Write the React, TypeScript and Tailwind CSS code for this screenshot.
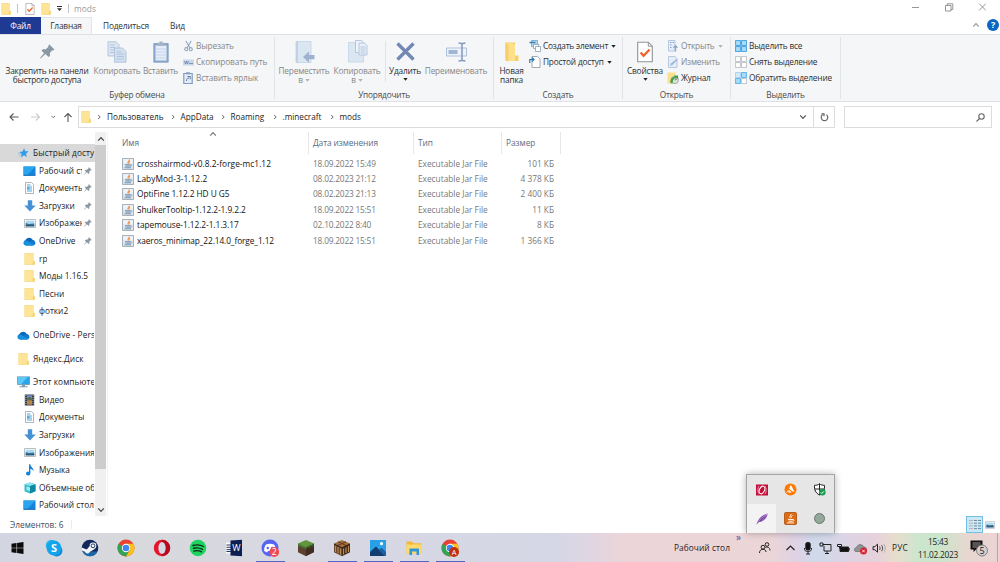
import type { ReactNode } from 'react';
import clsx from 'clsx';

type IconProps = { className?: string };

/* ---------- Small icons ---------- */

function FolderIcon({ className = 'w-[11px] h-[12px]' }: IconProps) {
  return (
    <svg className={clsx('shrink-0', className)} viewBox="0 0 11 12" preserveAspectRatio="none">
      <path d="M.5.300h9v7.500h1.200v3.900H.5z" fill="#f3cf6e" />
      <path d="M.8.600h8.400v10.800H.8z" fill="#fde497" />
      <path d="M9 8h1.500v3.400H8.300z" fill="#f6d470" />
    </svg>
  );
}

function CheckDoc({ className = 'w-[10px] h-[12px]' }: IconProps) {
  return (
    <svg className={clsx('shrink-0', className)} viewBox="0 0 16 21">
      <path d="M.7.7h10.600l4 4v15.600H.7z" fill="#fff" stroke="#8f9499" strokeWidth="1.100" />
      <path d="M11.300.7v4h4" fill="none" stroke="#8f9499" />
      <path d="M3.600 11l3 3.300 6-6.300" fill="none" stroke="#f0642c" strokeWidth="2.300" />
    </svg>
  );
}

function PinIcon({ className = 'w-[8px] h-[8px]' }: IconProps) {
  return (
    <svg className={clsx('shrink-0', className)} viewBox="0 0 16 16">
      <path d="M10 .6l5.400 5.200-1.300 1-1-.1-2.600 2.800.2 3-1.500 1.400-3.400-3.200L.6 15.400 0 15l4.300-5.200L1.600 6.900l1.500-1.400 3.100.1 2.800-2.700-.1-1.200z" fill="#8b98a3" />
    </svg>
  );
}

function StarIcon() {
  return (
    <svg className="w-[11px] h-[10px] shrink-0" viewBox="0 0 20 19">
      <path d="M11 .5l2.400 5.500 6.300.4-4.900 4.300 1.500 6.600-5.400-3.300L5 18l1.600-6.500L2 7.500l6.200-1z" fill="#2e9ce8" />
      <path d="M0 9h4M0 12h5M1 15h3" stroke="#7fc0ee" strokeWidth="1.200" />
    </svg>
  );
}

function DesktopIcon() {
  return (
    <svg className="w-[13px] h-[10px] shrink-0" viewBox="0 0 13 10">
      <path d="M.5.5h12v8.800H.5z" fill="#1585dc" />
      <path d="M.5.5h12L4 9.300H.5z" fill="#28a5ee" />
      <path d="M.5 9.300h12" stroke="#0a64b4" />
    </svg>
  );
}

function DocumentIcon() {
  return (
    <svg className="w-[11px] h-[12px] shrink-0" viewBox="0 0 11 12">
      <path d="M1.500.5h6l2 2v9h-8z" fill="#fff" stroke="#96a5b0" strokeWidth=".8" />
      <path d="M3 3h3.500M3 5h5M3 7h5M3 9h5" stroke="#3e9ad0" strokeWidth=".9" />
      <path d="M3 5h2.500v2.500H3z" fill="#56acd8" />
    </svg>
  );
}

function DownloadIcon() {
  return (
    <svg className="w-[12px] h-[12px] shrink-0" viewBox="0 0 12 12">
      <path d="M3.800.3h4.400v5.200h3.500L6 11.500.3 5.500h3.500z" fill="#4492d4" />
    </svg>
  );
}

function ImageIcon({ className = 'w-[12px] h-[9px]' }: IconProps) {
  return (
    <svg className={clsx('shrink-0', className)} viewBox="0 0 12 9">
      <path d="M.5.5h11v8H.5z" fill="#fff" stroke="#a6adb3" strokeWidth=".8" />
      <path d="M1.700 1.700h8.600v5.600H1.700z" fill="#a9d8f3" />
      <path d="M1.700 3.900l3 1 5.600-.4v2.800H1.700z" fill="#3a7294" />
      <path d="M1.700 6.300h8.600v1H1.700z" fill="#244e66" />
    </svg>
  );
}

function CloudIcon() {
  return (
    <svg className="w-[13px] h-[9px] shrink-0" viewBox="0 0 13 9">
      <path d="M3.200 8.500A2.900 2.900 0 0 1 2.400 3 4 4 0 0 1 9.600 2.800 3 3 0 0 1 10 8.500z" fill="#0a64b8" />
      <path d="M3 8.500C.5 8.300 0 5.700 1.200 4.200 2.500 3 4.700 3.600 6 4.700l5.800 3C11 8.500 10.500 8.500 9.800 8.500z" fill="#1590df" />
      <path d="M9.500 3.200c2.400-.2 3.700 2.700 2.300 4.500L6.200 4.900c.8-1 2-1.700 3.300-1.700z" fill="#1379cf" />
    </svg>
  );
}

function ComputerIcon() {
  return (
    <svg className="w-[13px] h-[12px] shrink-0" viewBox="0 0 13 12">
      <path d="M.5.800h12v7.700H.5z" fill="#2ba3e8" stroke="#5e7f97" strokeWidth=".6" />
      <path d="M.8 1.100h10L4 8.200H.8z" fill="#5cc8f7" />
      <path d="M5 8.500h3v1.700H5zM2.500 10.300h8v1h-8z" fill="#7f9aab" />
    </svg>
  );
}

function VideoIcon() {
  return (
    <svg className="w-[11px] h-[12px] shrink-0" viewBox="0 0 11 12">
      <path d="M.8.5h9.400v11H.8z" fill="#3b3d42" />
      <path d="M3 1.200h5v4.500H3z" fill="#6c8fd0" />
      <path d="M3 6.200h5v4.500H3z" fill="#b58a4d" />
      <path d="M3 4.200l3-1.500 2 2v1H3z" fill="#536c46" />
      <path d="M1.900 1v10M9.100 1v10" stroke="#d8d8d8" strokeWidth=".8" strokeDasharray="1 1" />
    </svg>
  );
}

function MusicIcon() {
  return (
    <svg className="w-[10px] h-[12px] shrink-0" viewBox="0 0 10 12">
      <path d="M4 .3h1.300C5.500 3 9 3.600 8.600 7.500c-.3-1.800-1.600-2.300-3.200-2.500v4.600A2.200 1.900 0 1 1 4 7.800z" fill="#1584d8" />
    </svg>
  );
}

function CubeIcon() {
  return (
    <svg className="w-[12px] h-[12px] shrink-0" viewBox="0 0 12 12">
      <path d="M6 .5l5.500 1.700v7L6 11.500.5 9.200v-7z" fill="#35bccd" />
      <path d="M6 .5l5.500 1.700L6 4 .5 2.200z" fill="#8ee6ee" />
      <path d="M6 4l5.500-1.800v7L6 11.500z" fill="#0d8a9e" />
      <path d="M2.500 4.500L6 5.500v3.500l-3.500-1z" fill="#a6edf2" />
    </svg>
  );
}

function JarIcon() {
  return (
    <svg className="w-[12px] h-[12px] shrink-0" viewBox="0 0 12 13" preserveAspectRatio="none">
      <path d="M.5.5h11v12H.5z" fill="#dce4ec" stroke="#9aa6b1" strokeWidth=".9" />
      <path d="M1.200 1.200h9.600v4.600H1.200z" fill="#eff3f7" />
      <path d="M7.200 1.700c.8 1.400-2.400 2-1 4.200M8 3.300C6.700 4 6.700 4.800 7.200 5.900" fill="none" stroke="#ee9a5a" strokeWidth="1.200" />
      <path d="M3 7.300h5.500M3.500 8.800h4.500M2.500 10.600h6.500M8.600 7.300c1.600 0 1 1.500-.4 1.700" fill="none" stroke="#6585a8" strokeWidth=".9" />
    </svg>
  );
}

/* ---------- Shared pieces ---------- */

function Caret({ className = 'text-[#333]' }: IconProps) {
  return (
    <svg className={clsx('w-[5px] h-[3px] shrink-0', className)} viewBox="0 0 5 3">
      <path d="M.3 0h4.400L2.500 2.700z" fill="currentColor" />
    </svg>
  );
}

function Chevron({ d, className }: { d: string; className: string }) {
  return (
    <svg className={clsx('shrink-0', className)} viewBox="0 0 10 10" fill="none" stroke="currentColor" strokeWidth="1.500">
      <path d={d} />
    </svg>
  );
}

const DOWN = 'M1.500 3l3.500 3.700L8.500 3';
const UP = 'M1.500 7L5 3.300 8.500 7';
const RIGHT = 'M3.500 1.500L7 5 3.500 8.500';

/* ---------- Title bar and tabs ---------- */

function TitleBar() {
  return (
    <div className="flex h-[17px] items-center bg-white">
      <FolderIcon className="ml-[1px] w-[10px] h-[12px]" />
      <div className="ml-[6px] h-[9px] w-px bg-[#c2c2c2]" />
      <CheckDoc className="ml-[7px] w-[10px] h-[12px]" />
      <FolderIcon className="ml-[6px] w-[10px] h-[12px]" />
      <svg className="ml-[5px] h-[7px] w-[7px]" viewBox="0 0 7 7">
        <path d="M1 1.500h5" stroke="#333" />
        <path d="M1 3.300h5L3.500 6z" fill="#333" />
      </svg>
      <div className="ml-[5px] h-[9px] w-px bg-[#c2c2c2]" />
      <span className="ml-[5px] text-[#999] tracking-[0.1px]">mods</span>
      <svg className="ml-auto mb-[3px] mr-[14px] h-[10px] w-[74px]" viewBox="0 0 74 10" fill="none" stroke="#8b8b8b" strokeWidth=".9">
        <path d="M0 5.500h7M33.500 3.500H39V9h-5.500zM35.200 3.500V1.800h5.600v5.700H39M67 1.500l7 7M74 1.500l-7 7" />
      </svg>
    </div>
  );
}

function Tabs() {
  return (
    <div className="flex h-[17px] items-stretch bg-white tracking-[-0.2px]">
      <div className="flex w-[41px] items-center justify-center bg-[#1f3a93] text-white">Файл</div>
      <div className="flex w-[51px] items-center justify-center border-r border-t border-[#e2e4e6] bg-[#f4f6f8] text-[#333]">Главная</div>
      <div className="flex w-[68px] items-center justify-center text-[#333]">Поделиться</div>
      <div className="flex w-[35px] items-center justify-center text-[#333]">Вид</div>
      <div className="ml-auto mb-[1px] flex items-center pr-[1px]">
        <Chevron d={UP} className="mr-[7px] h-[8px] w-[8px] text-[#999]" />
        <span className="flex h-[12px] w-[12px] items-center justify-center rounded-full bg-[#0a66c2] text-[9px] font-bold text-white">?</span>
      </div>
    </div>
  );
}

/* ---------- Ribbon ---------- */

function Group({ label, width, children }: { label: string; width: string; children: ReactNode }) {
  return (
    <div className={clsx('flex shrink-0 flex-col', width)}>
      <div className="flex h-[54px] items-start">{children}</div>
      <div className="text-center text-[#4b4b4b]">{label}</div>
    </div>
  );
}

function BigButton({ width, icon, lines, disabled, caret }: { width: string; icon: ReactNode; lines: string[]; disabled?: boolean; caret?: 'inline' | 'below' }) {
  return (
    <div className={clsx('flex shrink-0 flex-col items-center pt-[4px]', width, disabled ? 'text-[#878787]' : 'text-[#2f2f2f]')}>
      <div className="flex h-[25px] items-center justify-center">{icon}</div>
      {lines.map((line, i) => (
        <div key={line} className={clsx('flex h-[9.500px] items-center gap-[2px]', i === 0 && 'mt-[2px]')}>
          {line}
          {caret === 'inline' && i === lines.length - 1 && <Caret className="text-[#b2b2b2]" />}
        </div>
      ))}
      {caret === 'below' && <Caret className="mt-[2px] text-[#222]" />}
    </div>
  );
}

function SmallButton({ icon, label, disabled, caret }: { icon: ReactNode; label: string; disabled?: boolean; caret?: boolean }) {
  return (
    <div className={clsx('flex h-[16px] items-center', disabled ? 'text-[#878787]' : 'text-[#2f2f2f]')}>
      <span className="mr-[2px] flex w-[12px] justify-center">{icon}</span>
      {label}
      {caret && <Caret className={clsx('ml-[3px]', disabled ? 'text-[#b2b2b2]' : 'text-[#222]')} />}
    </div>
  );
}

const Separator = () => <div className="mt-[2px] h-[62px] w-px shrink-0 bg-[#e1e3e6]" />;

const GridIcon = ({ fills, stroke }: { fills: string[]; stroke: string[] }) => (
  <svg className="h-[12px] w-[12px]" viewBox="0 0 12 12">
    {[[0.6, 0.6], [6.6, 0.6], [0.6, 6.6], [6.6, 6.6]].map(([x, y], i) => (
      <rect key={i} x={x} y={y} width="4.800" height="4.800" fill={fills[i]} stroke={stroke[i]} strokeWidth=".9" />
    ))}
  </svg>
);

function Ribbon() {
  return (
    <div className="flex h-[68px] border-b border-t border-[#dfe1e4] bg-[#f4f6f8] tracking-[-0.19px]">
      <Group label="Буфер обмена" width="w-[274px]">
        <BigButton width="w-[94px]" icon={<PinIcon className="h-[15px] w-[15px]" />} lines={['Закрепить на панели', 'быстрого доступа']} />
        <BigButton
          width="w-[46px]"
          disabled
          icon={
            <svg className="h-[22px] w-[20px]" viewBox="0 0 20 22" stroke="#a8bcd7" strokeWidth=".8">
              <path d="M1 .800h8l3 3V15H1z" fill="#dce6f3" />
              <path d="M3 4h5M3 6.500h5M3 9h5M3 11.500h4" />
              <path d="M7.500 7h8l3.500 3.500v10.700H7.500z" fill="#d3e0f0" />
              <path d="M9.500 11h5M9.500 13.200h7.500M9.500 15.500h7.500M9.500 18h7.500" />
            </svg>
          }
          lines={['Копировать']}
        />
        <BigButton
          width="w-[41px]"
          disabled
          icon={
            <svg className="h-[22px] w-[16px]" viewBox="0 0 16 22">
              <path d="M.8 2.500h14.400v18.700H.8z" fill="#8ba6cb" stroke="#7e9bc2" strokeWidth=".8" />
              <path d="M2.500 4.500h11v15h-11z" fill="#e4edf8" />
              <path d="M2.500 8h11M2.500 11h11M2.500 14h11M2.500 17h11" stroke="#c3d4ea" />
              <path d="M4.500 1.800h2V.5h3v1.300h2v3h-7z" fill="#a3b2c4" />
            </svg>
          }
          lines={['Вставить']}
        />
        <div className="ml-[1px] pt-[3px] tracking-[-0.13px]">
          <SmallButton
            disabled
            label="Вырезать"
            icon={
              <svg className="h-[12px] w-[9px]" viewBox="0 0 10 12" fill="none" stroke="#8ea6c4" strokeWidth="1.200">
                <path d="M2 .5l4.500 7.500M8 .5L3.500 8" />
                <circle cx="2.500" cy="9.500" r="1.700" />
                <circle cx="7.500" cy="9.500" r="1.700" />
              </svg>
            }
          />
          <SmallButton
            disabled
            label="Скопировать путь"
            icon={
              <svg className="h-[7px] w-[11px]" viewBox="0 0 11 7">
                <path d="M0 .5h11v6H0z" fill="#c9d8ea" />
                <path d="M1.500 2l1 3 1-3 1 3 1-3M6 4.500h4" stroke="#6885ab" strokeWidth=".8" fill="none" />
              </svg>
            }
          />
          <SmallButton
            disabled
            label="Вставить ярлык"
            icon={
              <svg className="h-[12px] w-[10px]" viewBox="0 0 10 12">
                <path d="M.8 1.500h8.400v10H.8z" fill="#e4edf8" stroke="#819cc0" strokeWidth="1.200" />
                <path d="M3 .3h4v2H3z" fill="#819cc0" />
                <path d="M3.500 9c0-2 .5-3 2.500-3M4.500 4.500h2.700v2.800" stroke="#5c7da8" fill="none" />
              </svg>
            }
          />
        </div>
      </Group>
      <Separator />
      <Group label="Упорядочить" width="w-[218px]">
        <BigButton
          width="w-[58px]"
          disabled
          caret="inline"
          icon={
            <svg className="h-[22px] w-[22px]" viewBox="0 0 22 22">
              <path d="M3 .500h15v21H3z" fill="#dbe6f3" stroke="#cbd9ea" />
              <path d="M4 .5v21" stroke="#c0d1e5" strokeWidth="2" />
              <path d="M10 16l6-5.500v3.500h5.500v4.200H16v3.500z" fill="#9eb2cf" />
            </svg>
          }
          lines={['Переместить', 'в']}
        />
        <BigButton
          width="w-[48px]"
          disabled
          caret="inline"
          icon={
            <svg className="h-[23px] w-[21px]" viewBox="0 0 21 23">
              <path d="M1.500 2.500h15V22h-15z" fill="#dbe6f3" stroke="#cbd9ea" />
              <path d="M8.500.500h6l2 2v10h-8z" fill="#eef3fa" stroke="#a8bcd7" strokeWidth=".8" />
              <path d="M12 3h5.500L20 5.500V15h-8z" fill="#e9f0f8" stroke="#a8bcd7" strokeWidth=".8" />
              <path d="M13.500 7h5M13.500 9h5M13.500 11h5M13.500 13h5" stroke="#a8bcd7" strokeWidth=".8" />
            </svg>
          }
          lines={['Копировать', 'в']}
        />
        <div className="ml-[4px] mt-[6px] h-[41px] w-px shrink-0 bg-[#e1e3e6]" />
        <BigButton
          width="w-[38px]"
          caret="below"
          icon={
            <svg className="h-[19px] w-[19px]" viewBox="0 0 19 19">
              <path d="M1.500 1.500l16 16M17.500 1.500l-16 16" stroke="#7388b3" strokeWidth="3.400" />
            </svg>
          }
          lines={['Удалить']}
        />
        <BigButton
          width="w-[64px]"
          disabled
          icon={
            <svg className="h-[20px] w-[21px]" viewBox="0 0 21 20">
              <path d="M.5 6h20v8H.5z" fill="#eef3fa" stroke="#a8bcd7" strokeWidth=".9" />
              <path d="M2.500 8h9v4h-9z" fill="#9fb5d6" />
              <path d="M12.500 1c2 0 3.500.5 3.500 1.500 0-1 1.500-1.500 3.500-1.500M16 2v16M12.500 19c2 0 3.500-.5 3.500-1.500 0 1 1.500 1.500 3.500 1.500" stroke="#8299bf" strokeWidth="1.500" fill="none" />
            </svg>
          }
          lines={['Переименовать']}
        />
      </Group>
      <Separator />
      <Group label="Создать" width="w-[128px]">
        <BigButton
          width="w-[35px]"
          icon={
            <svg className="h-[20px] w-[14px]" viewBox="0 0 14 20">
              <path d="M.5.500h9.500v13h3.500v5.500H.5z" fill="#f5d06a" />
              <path d="M.5.500h4l5.500 2v16.500H.5z" fill="#fde08a" />
              <path d="M.5.500l3 2.500v16.500l-3-1.500z" fill="#f7cf68" />
            </svg>
          }
          lines={['Новая', 'папка']}
        />
        <div className="pt-[3px]">
          <SmallButton
            label="Создать элемент"
            caret
            icon={
              <svg className="h-[12px] w-[12px]" viewBox="0 0 12 12" strokeWidth=".8">
                <path d="M2.500.5h6v6h-6z" fill="#b6daf2" stroke="#6aa5cc" />
                <path d="M.5 2.500h6" stroke="#3f80ad" strokeWidth="1.500" />
                <path d="M4.500 4.500h5v4h-5z" fill="#fff" stroke="#8b9fae" />
                <path d="M6.500 6.500h5v5h-5z" fill="#fff" stroke="#8b9fae" />
              </svg>
            }
          />
          <SmallButton
            label="Простой доступ"
            caret
            icon={
              <svg className="h-[12px] w-[12px]" viewBox="0 0 12 12">
                <path d="M3 .5h5.500L11 3v8.500H3z" fill="#fff" stroke="#8e979e" strokeWidth=".8" />
                <path d="M.8 7V3.500h3.500M3 1.500l2 2-2 2" stroke="#2f75a8" strokeWidth="1.200" fill="none" />
              </svg>
            }
          />
        </div>
      </Group>
      <Separator />
      <Group label="Открыть" width="w-[107px]">
        <BigButton width="w-[44px]" caret="below" icon={<CheckDoc className="h-[22px] w-[16px]" />} lines={['Свойства']} />
        <div className="pt-[3px]">
          <SmallButton
            disabled
            caret
            label="Открыть"
            icon={
              <svg className="h-[12px] w-[10px]" viewBox="0 0 10 12">
                <path d="M.5.5h6.500v10.500H.5z" fill="#e4edf8" stroke="#a9bddb" strokeWidth=".8" />
                <path d="M2 2.500h1.500M2 5h1.500M2 7.500h1.500M4.500 2.500H6" stroke="#8ca5ca" strokeWidth="1.200" />
                <path d="M7.500 11.500V6M5.500 7.700l2-2 2 2" stroke="#8ca5ca" strokeWidth="1.300" fill="none" />
              </svg>
            }
          />
          <SmallButton
            disabled
            label="Изменить"
            icon={
              <svg className="h-[12px] w-[10px]" viewBox="0 0 10 12">
                <path d="M.5.5H7l2 2v9H.5z" fill="#e4edf8" stroke="#a9bddb" strokeWidth=".8" />
                <path d="M2 10l1-2.500L8.500 3l1 1L4 9.300z" fill="#9db5d8" />
              </svg>
            }
          />
          <SmallButton
            label="Журнал"
            icon={
              <svg className="h-[12px] w-[12px]" viewBox="0 0 12 12">
                <path d="M.5.5h8v11h-8z" fill="#fbe08c" />
                <circle cx="7.800" cy="8" r="3.700" fill="#dce5dc" stroke="#8aa08b" strokeWidth=".8" />
                <path d="M3.500 11.500C3 7.500 4.500 5 8 5L7 3.500h4V7L9.700 6.200C7 6 5.500 8 5.700 11z" fill="#41a047" />
                <path d="M7.800 8l2-.8" stroke="#555" strokeWidth=".8" />
              </svg>
            }
          />
        </div>
      </Group>
      <Separator />
      <Group label="Выделить" width="w-[109px]">
        <div className="ml-[4px] pt-[3px]">
          <SmallButton
            label="Выделить все"
            icon={<GridIcon fills={['#a9dcfa', '#a9dcfa', '#a9dcfa', '#a9dcfa']} stroke={['#3a9ddd', '#3a9ddd', '#3a9ddd', '#3a9ddd']} />}
          />
          <SmallButton
            label="Снять выделение"
            icon={<GridIcon fills={['#fff', '#fff', '#fff', '#fff']} stroke={['#bcc1c5', '#bcc1c5', '#bcc1c5', '#bcc1c5']} />}
          />
          <SmallButton
            label="Обратить выделение"
            icon={<GridIcon fills={['#d5ecfa', '#a9dcfa', '#a9dcfa', '#fff']} stroke={['#a6cfea', '#52aee6', '#52aee6', '#bcc1c5']} />}
          />
        </div>
      </Group>
      <Separator />
    </div>
  );
}

/* ---------- Address bar ---------- */

const crumbs = [
  { name: 'Пользователь', width: 'w-[73.500px]' },
  { name: 'AppData', width: 'w-[50px]' },
  { name: 'Roaming', width: 'w-[52px]' },
  { name: '.minecraft', width: 'w-[57px]' },
  { name: 'mods', width: 'w-[40px]' },
];

function AddressBar() {
  return (
    <div className="flex h-[30px] items-center bg-white pr-[8px]">
      <svg className="h-[12px] w-[78px] shrink-0" viewBox="0 0 78 12" fill="none">
        <path d="M10 6h8.500M13.500 2.500L10 6l3.500 3.500" stroke="#5a5a5a" strokeWidth="1.100" />
        <path d="M31 6h8.500M36 2.500L39.500 6 36 9.500" stroke="#cdcdcd" strokeWidth="1.100" />
        <path d="M51.500 5l1.700 1.700L55 5" stroke="#777" />
        <path d="M68 11V2.500M64.500 6L68 2.500 71.500 6" stroke="#5a5a5a" strokeWidth="1.100" />
      </svg>
      <div className="flex h-[22px] w-[757px] items-center border border-[#dcdcdc]">
        <FolderIcon className="ml-[2px] h-[12px] w-[10px]" />
        <div className="ml-[4px] flex text-[8.200px]">
          {crumbs.map((c) => (
            <div key={c.name} className={clsx('flex shrink-0 items-center text-[#222]', c.width)}>
              <Chevron d={RIGHT} className="ml-[1px] mr-[5px] h-[6px] w-[6px] text-[#555]" />
              {c.name}
            </div>
          ))}
        </div>
        <Chevron d={DOWN} className="ml-auto mr-[6px] h-[8px] w-[8px] text-[#555]" />
        <div className="flex h-full w-[21px] items-center justify-center border-l border-[#dcdcdc]">
          <svg className="h-[9px] w-[9px]" viewBox="0 0 9 9" fill="none" stroke="#666" strokeWidth="1.200">
            <path d="M6.500 1.800A3.300 3.300 0 1 1 2.500 1.800M1.500.8h2.500v2.500" />
          </svg>
        </div>
      </div>
      <div className="ml-auto flex h-[22px] w-[148px] items-center justify-end border border-[#dcdcdc] pr-[6px]">
        <svg className="h-[9px] w-[9px]" viewBox="0 0 9 9" fill="none" stroke="#666" strokeWidth="1.100">
          <circle cx="5.500" cy="3.500" r="2.700" />
          <path d="M3.500 5.500L.5 8.500" />
        </svg>
      </div>
    </div>
  );
}

/* ---------- Sidebar ---------- */

type NavItem = { label: string; icon: ReactNode; root?: boolean; active?: boolean; pinned?: boolean; gap?: boolean };

const navItems: NavItem[] = [
  { label: 'Быстрый доступ', icon: <StarIcon />, root: true, active: true },
  { label: 'Рабочий стол', icon: <DesktopIcon />, pinned: true },
  { label: 'Документы', icon: <DocumentIcon />, pinned: true },
  { label: 'Загрузки', icon: <DownloadIcon />, pinned: true },
  { label: 'Изображения', icon: <ImageIcon />, pinned: true },
  { label: 'OneDrive', icon: <CloudIcon />, pinned: true },
  { label: 'rp', icon: <FolderIcon /> },
  { label: 'Моды 1.16.5', icon: <FolderIcon /> },
  { label: 'Песни', icon: <FolderIcon /> },
  { label: 'фотки2', icon: <FolderIcon /> },
  { label: 'OneDrive - Personal', icon: <CloudIcon />, root: true, gap: true },
  { label: 'Яндекс.Диск', icon: <FolderIcon />, root: true, gap: true },
  { label: 'Этот компьютер', icon: <ComputerIcon />, root: true, gap: true },
  { label: 'Видео', icon: <VideoIcon /> },
  { label: 'Документы', icon: <DocumentIcon /> },
  { label: 'Загрузки', icon: <DownloadIcon /> },
  { label: 'Изображения', icon: <ImageIcon /> },
  { label: 'Музыка', icon: <MusicIcon /> },
  { label: 'Объемные объекты', icon: <CubeIcon /> },
  { label: 'Рабочий стол', icon: <DesktopIcon /> },
];

function Sidebar() {
  return (
    <div className="flex w-[108px] shrink-0 border-r border-[#f3f3f3]">
      <div className="w-[95px] overflow-hidden pt-[12.300px]">
        {navItems.map((item, i) => (
          <div
            key={i}
            className={clsx(
              'flex h-[17.600px] items-center pr-[1px] text-[#1b1b1b]',
              item.root ? 'pl-[17px]' : 'pl-[23px]',
              item.gap && 'mt-[6px]',
              item.active && 'bg-[#d9d9d9]',
            )}
          >
            <span className="mr-[3px] flex w-[13px] shrink-0 justify-center">{item.icon}</span>
            <span
              className={clsx(
                'overflow-hidden',
                item.pinned && 'w-[43px] shrink-0',
                item.root && 'tracking-[0.1px]',
              )}
            >
              {item.label}
            </span>
            {item.pinned && <PinIcon className="ml-[2px] h-[8px] w-[8px]" />}
          </div>
        ))}
      </div>
      <div className="flex w-[11px] flex-col items-center bg-[#f0f0f0]">
        <Chevron d={UP} className="mb-[2px] mt-[3px] h-[8px] w-[8px] text-[#444]" />
        <div className="h-[324px] w-full bg-[#cdcdcd]" />
        <Chevron d={DOWN} className="mt-auto mb-[2px] h-[8px] w-[8px] text-[#444]" />
      </div>
    </div>
  );
}

/* ---------- File list ---------- */

const files = [
  { name: 'crosshairmod-v0.8.2-forge-mc1.12', date: '18.09.2022 15:49', size: '101 КБ', fit: 'tracking-[0.05px]' },
  { name: 'LabyMod-3-1.12.2', date: '08.02.2023 21:12', size: '4 378 КБ', fit: 'tracking-[0.07px]' },
  { name: 'OptiFine 1.12.2 HD U G5', date: '08.02.2023 21:13', size: '2 400 КБ', fit: 'tracking-[-0.05px]' },
  { name: 'ShulkerTooltip-1.12.2-1.9.2.2', date: '18.09.2022 15:51', size: '11 КБ', fit: 'tracking-[-0.05px]' },
  { name: 'tapemouse-1.12.2-1.1.3.17', date: '02.10.2022 8:40', size: '8 КБ', fit: 'tracking-[-0.04px]' },
  { name: 'xaeros_minimap_22.14.0_forge_1.12', date: '18.09.2022 15:51', size: '1 366 КБ', fit: 'tracking-[-0.08px]' },
];

function FileList() {
  return (
    <div className="flex-1 pl-[14px]">
      <div className="flex h-[22px] items-stretch text-[#5b6b85]">
        <div className="flex w-[187px] items-center justify-between border-r border-[#e6e6e6]">
          <span>Имя</span>
          <Chevron d={UP} className="mr-[91px] mb-[18px] h-[8px] w-[8px] text-[#777]" />
        </div>
        <div className="flex w-[105px] items-center border-r border-[#e6e6e6] pl-[4px] tracking-[-0.08px]">Дата изменения</div>
        <div className="flex w-[88px] items-center border-r border-[#e6e6e6] pl-[4px]">Тип</div>
        <div className="flex w-[59px] items-center border-r border-[#e6e6e6] pl-[4px]">Размер</div>
      </div>
      <div className="pt-[2px]">
        {files.map((f) => (
          <div key={f.name} className="flex h-[15.400px] items-center text-[#777]">
            <div className="flex w-[191px] items-center text-[#111]">
              <JarIcon />
              <span className={clsx('ml-[3px]', f.fit)}>{f.name}</span>
            </div>
            <span className="w-[105px] tracking-[-0.18px]">{f.date}</span>
            <span className="w-[86px]">Executable Jar File</span>
            <span className="w-[50px] text-right">{f.size}</span>
          </div>
        ))}
      </div>
    </div>
  );
}

/* ---------- Tray popup ---------- */

function TrayPopup() {
  return (
    <div className="absolute left-[746px] top-[474px] grid h-[59px] w-[89px] grid-cols-3 grid-rows-2 border border-b-0 border-[#a5a5a5] bg-[#e6e6e6] shadow-[0_0_7px_rgba(0,0,0,0.3)]">
      <div className="flex items-center justify-center">
        <svg className="h-[12px] w-[12px]" viewBox="0 0 12 12">
          <path d="M0 .5h12v11H0z" fill="#c40f39" />
          <ellipse cx="6" cy="6" rx="2.500" ry="4" transform="rotate(25 6 6)" fill="none" stroke="#fff" strokeWidth="1" />
          <path d="M3 2C1.500 4 1.500 8 3 10M9 2c1.500 2 1.500 6 0 8" stroke="#f5b5c2" strokeWidth=".8" fill="none" />
        </svg>
      </div>
      <div className="flex items-center justify-center">
        <svg className="h-[13px] w-[13px]" viewBox="0 0 13 13">
          <circle cx="6.500" cy="6.500" r="6" fill="#ff7800" />
          <path d="M6.500 2.300c.8 0 1 .5 1.300 1.200L10.500 9c-2.500-.5-4-2-5.300-3.200zM4.800 6.500L3 9.500c-.3.700-.8-.2-.3-1zM4.900 7l3 2.500H4z" fill="#fff" />
        </svg>
      </div>
      <div className="flex items-center justify-center">
        <svg className="h-[13px] w-[13px]" viewBox="0 0 13 13">
          <path d="M6.500.8C8 2 9.500 2.300 11.500 2.300c.3 4.500-1 7.500-5 9.700-4-2.200-5.300-5.200-5-9.700C3.500 2.300 5 2 6.500.8z" fill="#fff" stroke="#222" />
          <path d="M6.500.8V12M1.500 6h10" stroke="#222" />
          <circle cx="9.300" cy="9.300" r="3.300" fill="#1c9a50" />
          <path d="M7.700 9.300l1.200 1.200 2-2.200" stroke="#fff" fill="none" strokeWidth=".9" />
        </svg>
      </div>
      <div className="flex items-center justify-center bg-[#f3f3f3]">
        <svg className="h-[12px] w-[12px]" viewBox="0 0 12 12">
          <path d="M.5 11.500C2 6 5.500 2 11.700.5 11 5.500 7.500 8.700 3 9z" fill="#9157bd" />
          <path d="M.5 11.500C4 7 7 4 11 1.200" stroke="#d7bdeb" strokeWidth=".7" />
        </svg>
      </div>
      <div className="flex items-center justify-center">
        <svg className="h-[13px] w-[13px]" viewBox="0 0 13 13">
          <rect x=".5" y=".5" width="12" height="12" rx="1.200" fill="#df6b12" stroke="#a94c0a" strokeWidth=".8" />
          <path d="M7 2c.9 1.300-2.400 2.200-.8 4.300M8.500 3.500C7.200 4.200 7 4.700 7.600 5.700M4 7.500h5M4.500 9.200h4M3 10.900h7M9 7.500c1.700 0 1 1.500-.4 1.700" fill="none" stroke="#fff" strokeWidth=".9" />
        </svg>
      </div>
      <div className="flex items-center justify-center">
        <div className="h-[11px] w-[11px] rounded-full border border-[#68786e] bg-[#94a89b]" />
      </div>
    </div>
  );
}

/* ---------- Taskbar ---------- */

const ChromeLogo = () => (
  <g>
    <circle cx="9" cy="9" r="8.500" fill="#e94235" />
    <path d="M1.640 4.750A8.500 8.500 0 0 0 9 17.500L12.700 11.100 9 9z" fill="#34a353" />
    <path d="M9 4.750h7.360A8.500 8.500 0 0 1 9 17.500l3.680-6.370z" fill="#fbc116" />
    <circle cx="9" cy="9" r="4.200" fill="#fff" />
    <circle cx="9" cy="9" r="3.300" fill="#4285f4" />
  </g>
);

const apps: { name: string; open?: boolean; art: ReactNode }[] = [
  {
    name: 'start',
    art: <path d="M2.500 4.700l5-.7v4.700h-5zM8.100 3.900L14.500 3v5.700H8.100zM2.500 9.300h5V14l-5-.7zM8.100 9.300h6.400V15l-6.400-.9z" fill="#0b0b0b" />,
  },
  {
    name: 'skype',
    art: (
      <g>
        <circle cx="6.500" cy="6.500" r="5.700" fill="#25b3f0" />
        <circle cx="11.700" cy="11.700" r="5.700" fill="#0e8ad8" />
        <circle cx="9" cy="9" r="7.400" fill="#12a5e9" />
        <text x="9" y="13" textAnchor="middle" fontSize="11" fontWeight="bold" fill="#fff">S</text>
      </g>
    ),
  },
  {
    name: 'steam',
    art: (
      <g>
        <circle cx="9" cy="9" r="8.300" fill="#12285a" />
        <path d="M1.500 12.500A8.300 8.300 0 0 0 16.500 12.500z" fill="#1c68a5" />
        <path d="M.7 8.500l5 2 4-4.500 4 4-5 3A2.500 2.500 0 0 1 4 12.800L.9 11.500z" fill="#f3f6f9" />
        <circle cx="12" cy="6.800" r="3.300" fill="#f3f6f9" />
        <circle cx="12" cy="6.800" r="1.900" fill="#f3f6f9" stroke="#12285a" strokeWidth=".9" />
      </g>
    ),
  },
  { name: 'chrome', art: <ChromeLogo /> },
  {
    name: 'opera',
    art: (
      <g>
        <ellipse cx="9" cy="9" rx="8.200" ry="8.200" fill="#e5142d" />
        <path d="M9 .8a8.200 8.200 0 0 1 0 16.400z" fill="#b9091d" />
        <ellipse cx="9" cy="9" rx="3.700" ry="6" fill="#d6d8e3" />
      </g>
    ),
  },
  {
    name: 'spotify',
    art: (
      <g>
        <circle cx="9" cy="9" r="8.300" fill="#1ed45f" />
        <path d="M4 6.500c3.500-1 7.500-.7 10.500 1M4.500 9.300c3-.8 6.300-.5 9 1M5 12c2.500-.6 5.200-.4 7.500.8" fill="none" stroke="#122c1b" strokeWidth="1.400" strokeLinecap="round" />
      </g>
    ),
  },
  {
    name: 'word',
    art: (
      <g>
        <path d="M1 3.500h8v11H1z" fill="#f8f9fb" />
        <path d="M1.500 6h5M1.500 8.300h5M1.500 10.600h5M1.500 12.500h5" stroke="#10234f" strokeWidth=".9" />
        <path d="M5.500 1.500L17 .8v16.400l-11.500-.8z" fill="#0d1f52" />
        <text x="11.300" y="12.300" textAnchor="middle" fontSize="9" fill="#fff">W</text>
      </g>
    ),
  },
  {
    name: 'discord',
    open: true,
    art: (
      <g>
        <circle cx="9" cy="9" r="8.500" fill="#5865f2" />
        <path d="M5 5.500c2.500-1 5.500-1 8 0 1.500 2 2 4 1.800 6.500-1.300 1-2.300 1.300-3 1.300l-.8-1.200H7l-.8 1.200c-.7 0-1.700-.3-3-1.300C3 9.500 3.500 7.500 5 5.500z" fill="#fff" />
        <circle cx="6.800" cy="9" r="1.200" fill="#5865f2" />
        <circle cx="11.200" cy="9" r="1.200" fill="#5865f2" />
        <circle cx="13.200" cy="13" r="4.900" fill="#ee4c50" />
        <text x="13.200" y="16" textAnchor="middle" fontSize="8.500" fill="#fff">2</text>
      </g>
    ),
  },
  {
    name: 'minecraft',
    art: (
      <g>
        <path d="M1 4.500L9 8v9.300L1 13.200z" fill="#5d4130" />
        <path d="M17 4.500L9 8v9.300l8-4.100z" fill="#412c20" />
        <path d="M9 1l8 3.500L9 8.200 1 4.500z" fill="#62953e" />
        <path d="M1 4.500L9 8.200v2l-2-1.500-1.500.7L4 7.300l-1.500.5L1 6.700z" fill="#487a2d" />
        <path d="M17 4.500L9 8.200v2l2-1.500 1.500.3 1.500-1.500 1.500.3L17 6.500z" fill="#345e20" />
      </g>
    ),
  },
  {
    name: 'crafting table',
    open: true,
    art: (
      <g>
        <path d="M1 4.500L9 8v9.300L1 13.200z" fill="#684629" />
        <path d="M17 4.500L9 8v9.300l8-4.100z" fill="#432d1b" />
        <path d="M9 1l8 3.500L9 8.200 1 4.500z" fill="#a46b3c" />
        <path d="M5 2.700l8 3.700M13 2.700L5 6.400" stroke="#5e3b20" />
        <path d="M2.500 7v6M5 8v6.500M7.500 9.500v6M10.500 9.500v6M13 8.500V14M15.500 7v6" stroke="#bc8b56" strokeWidth="1.100" />
        <path d="M1 5l8 3.800L17 5" stroke="#33231a" fill="none" />
      </g>
    ),
  },
  {
    name: 'photos',
    open: true,
    art: (
      <g>
        <path d="M1 1h16v16H1z" fill="#27a0e6" />
        <path d="M1 13L7 7.500l9 9.500H1z" fill="#123d70" />
        <path d="M10 10.700l2.500-2L17 13v4h-1z" fill="#1a5f9e" />
        <circle cx="12.500" cy="4.700" r="1.600" fill="#fff" />
      </g>
    ),
  },
  {
    name: 'explorer',
    open: true,
    art: (
      <g>
        <path d="M1.500 2.500h5.500l1.500 1.800h8V14.500h-15z" fill="#f5b83b" />
        <path d="M1.500 5.500h15v9h-15z" fill="#fdda6c" />
        <path d="M4.500 9.500h9.500V16h-2.500v-3.500H7V16H4.500z" fill="#3295d8" />
      </g>
    ),
  },
  {
    name: 'chrome profile',
    open: true,
    art: (
      <g>
        <ChromeLogo />
        <circle cx="13" cy="13" r="5" fill="#bf3011" />
        <text x="13" y="15.600" textAnchor="middle" fontSize="7.500" fill="#fff">A</text>
      </g>
    ),
  },
];

function SystemTray() {
  return (
    <svg className="h-[14px] w-[132px] shrink-0" viewBox="0 0 132 14" fill="none" stroke="#222" strokeWidth="1">
      {/* people */}
      <circle cx="5" cy="6.200" r="1.900" />
      <path d="M1.500 12c0-2.500 1.500-3.700 3.500-3.700S8 9.500 8 11" />
      <circle cx="9" cy="3.500" r="1.800" />
      <path d="M7.500 6.500c2.500-1.200 4.500.5 4.500 3" />
      {/* chevron */}
      <path d="M28.500 9l4-4 4 4" strokeWidth="1.200" />
      {/* microphone */}
      <rect x="47.800" y="1.500" width="4.400" height="7.500" rx="1.500" fill="#111" />
      <path d="M46.500 7v1.500c0 2.500 7 2.500 7 0V7M50 10.500v2.500M48 13h4" />
      {/* network */}
      <path d="M64.500 3.500h8.500v6.500h-7V5M69 10v2.500M67 12.500h4M62 2h3v3h-3z" />
      {/* battery */}
      <path d="M82 6h8.500v4.500H82z" fill="#111" />
      <path d="M91.200 7v2.500M79.500 3.500h4v2h-4zM81.500 5.500v2" />
      {/* cloud with error */}
      <path d="M97.500 10.500c-2-1-1-4 1-4C99.500 3 104 2.500 106 6c1.500 0 2.500 1 2.500 2.500s-1 2-2 2z" fill="#8e9494" stroke="#666c6c" strokeWidth=".7" />
      <circle cx="105.500" cy="10" r="3.500" fill="#d92332" stroke="none" />
      <path d="M104.200 8.700l2.600 2.600M106.800 8.700l-2.600 2.600" stroke="#fff" strokeWidth=".8" />
      {/* speaker */}
      <path d="M115 5.700h1.800l2.700-2.500v8l-2.700-2.500H115z" />
      <path d="M121.500 5.500c.8 1 .8 2.500 0 3.500M123.500 4.200c1.500 1.800 1.500 4.200 0 6" strokeWidth=".8" />
      <path d="M125.700 3c2 2.500 2 6 0 8.500" stroke="#999" strokeWidth=".7" />
    </svg>
  );
}

function Taskbar() {
  return (
    <div className="flex h-[29px] items-stretch bg-[linear-gradient(90deg,#d3d6e1_0px,#d8d9dc_130px,#d7d8e2_300px,#d6d7e6_560px,#e0d5e3_590px,#ebd5d9_620px,#ecd5d6_770px,#dfd2e4_795px,#cfdaeb_815px,#dcd4e5_845px,#e6d1dc_875px,#e8dccd_895px,#cce6ce_918px,#cae5c9_940px,#e8d7d1_968px,#ecd3d5_1000px)] text-[#222]">
      {apps.map((app) => (
        <div key={app.name} className="flex w-[36px] shrink-0 flex-col items-center pt-[6px]">
          <svg className="h-[18px] w-[18px] shrink-0" viewBox="0 0 18 18">{app.art}</svg>
          {app.open && <div className="mt-auto h-px w-[29px] bg-[#5565c4]" />}
        </div>
      ))}
      <div className="ml-auto flex items-center">
        <span className="tracking-[0.1px]">Рабочий стол</span>
        <span className="mb-[21px] ml-[6px] mr-[17px] text-[10px] text-[#4a4aa8]">»</span>
        <SystemTray />
        <span className="ml-[2px] w-[17px] tracking-[0.2px]">РУС</span>
        <div className="ml-[8px] w-[42px] text-center tracking-[-0.22px]">
          <div className="h-[13px] leading-[13px]">15:43</div>
          <div className="h-[13px] leading-[13px]">11.02.2023</div>
        </div>
        <svg className="ml-[11px] mr-[7px] h-[18px] w-[20px]" viewBox="0 0 20 18">
          <path d="M.5 1.500h12v9H6L3.500 13v-2.500h-3z" fill="#111" />
          <path d="M2.500 4h8M2.500 6h8M2.500 8h5" stroke="#c9b8ba" strokeWidth=".8" />
          <circle cx="12" cy="11.500" r="5.500" fill="#d5cfd0" stroke="#777" strokeWidth=".9" />
          <text x="12" y="14.700" textAnchor="middle" fontSize="9" fill="#222">5</text>
        </svg>
        <div className="h-full w-[3px] border-l border-[#b7a5aa]" />
      </div>
    </div>
  );
}

export default function App() {
  return (
    <div className="relative flex h-[562px] w-[1000px] flex-col overflow-hidden whitespace-nowrap bg-white font-['Open_Sans','Noto_Sans',sans-serif] text-[8.300px] leading-[12px]">
      <TitleBar />
      <Tabs />
      <Ribbon />
      <AddressBar />
      <div className="flex h-[384px] shrink-0">
        <Sidebar />
        <FileList />
      </div>
      <div className="flex h-[17px] items-center pl-[10px] text-[#3c4a63]">
        Элементов: 6
        <div className="ml-[8px] h-[9px] w-px bg-[#ebebeb]" />
        <div className="ml-auto mr-[2px] flex h-[17px] w-[17px] items-center justify-center border border-[#70c0e7] bg-[#cce8f6]">
          <svg className="h-[11px] w-[12px]" viewBox="0 0 12 11">
            <path d="M.5 1.500h3M.5 4.200h3M.5 6.900h3M.5 9.600h3" stroke="#b17777" strokeDasharray="1 1" />
            <path d="M5 1.500h3M5 4.200h3M5 6.900h3M5 9.600h3M9 1.500h3M9 4.200h3M9 6.900h3M9 9.600h3" stroke="#6b8d9c" />
          </svg>
        </div>
        <ImageIcon className="mr-[5px] h-[8px] w-[10px]" />
      </div>
      <Taskbar />
      <TrayPopup />
    </div>
  );
}
